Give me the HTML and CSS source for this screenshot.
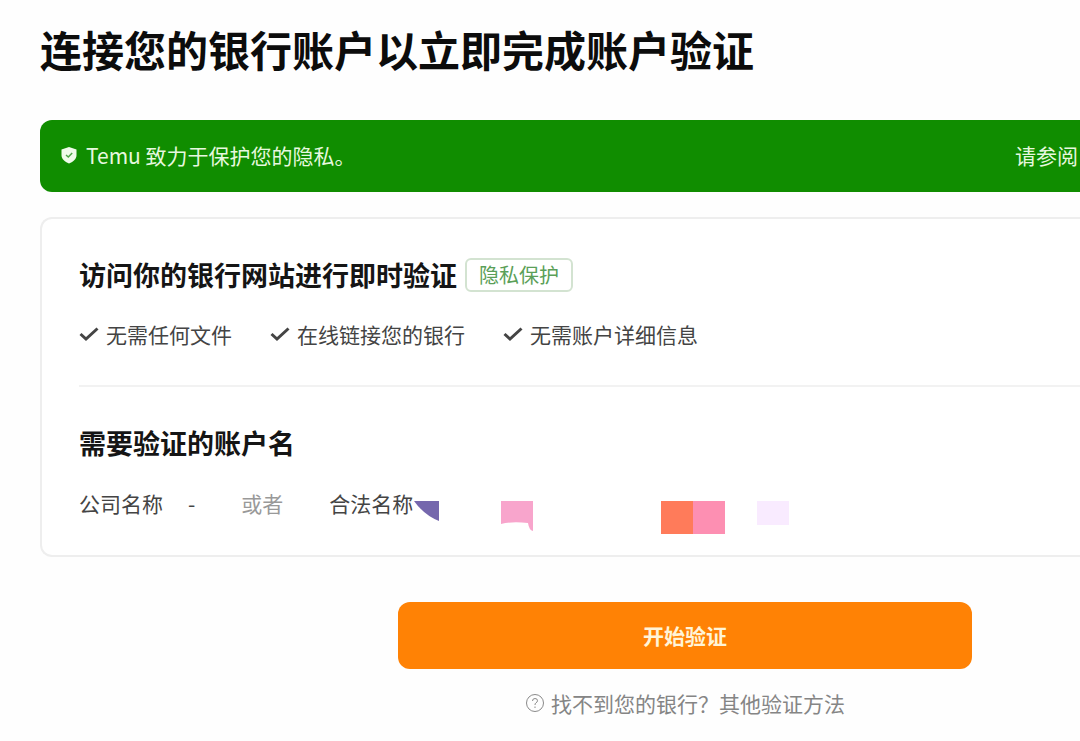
FILE: index.html
```
<!DOCTYPE html>
<html lang="zh-CN">
<head>
  <meta charset="UTF-8" />
  <meta name="viewport" content="width=device-width, initial-scale=1.0"/>
  <title>账户验证</title>
  <link rel="stylesheet" href="styles.css">
</head>
<body>

  <main>
    <h1>连接您的银行账户以立即完成账户验证</h1>

    <div class="banner">
      <svg class="shield" viewBox="0 0 16 18" aria-hidden="true">
        <path fill="#effbea" d="M8 1 L15.5 3.5 V9 C15.5 13 12.5 15.5 8 17.5 C3.5 15.5 .5 13 .5 9 V3.5 Z"/>
        <path fill="none" stroke="#4fa548" stroke-width="1.5" d="M5 9 L7.3 11 L11.2 7"/>
      </svg>
      <span>Temu 致力于保护您的隐私。</span>
      <a href="#" class="banner-link">请参阅</a>
    </div>

    <section class="card">
      <div class="card-title">
        <h2>访问你的银行网站进行即时验证</h2>
        <span class="badge">隐私保护</span>
      </div>
      <ul class="features">
        <li><svg class="check" viewBox="0 0 20 16" aria-hidden="true"><path d="M1.5 8 L7 13 L18.5 2.5"/></svg>无需任何文件</li>
        <li><svg class="check" viewBox="0 0 20 16" aria-hidden="true"><path d="M1.5 8 L7 13 L18.5 2.5"/></svg>在线链接您的银行</li>
        <li><svg class="check" viewBox="0 0 20 16" aria-hidden="true"><path d="M1.5 8 L7 13 L18.5 2.5"/></svg>无需账户详细信息</li>
      </ul>

      <h2 class="names-title">需要验证的账户名</h2>
      <div class="names">
        <span>公司名称</span>
        <span class="dash">-</span>
        <span class="or">或者</span>
        <span>合法名称</span>
        <svg class="mask" width="375" height="33" viewBox="0 0 375 33" aria-hidden="true">
          <path fill="#7567ad" d="M0 0 H25 V20 Q10 14 0 0 Z"/>
          <path fill="#f8a5cc" d="M87 0 H119 V30 Q115 29 114 22 Q98 20 87 23 Z"/>
          <path fill="#ff7b5a" d="M247 0 H279 V33 H247 Z"/>
          <path fill="#fd8fb2" d="M279 0 H311 V33 H279 Z"/>
          <path fill="#f9ebff" d="M343 0 H375 V24 H343 Z"/>
        </svg>
      </div>
    </section>

    <div class="actions">
      <button type="button" class="btn">开始验证</button>
      <a href="#" class="help">
        <svg class="question" viewBox="0 0 20 20" aria-hidden="true">
          <circle cx="10" cy="10" r="8.5"/>
          <path d="M7.5 8 Q7.5 5.5 10 5.5 Q12.5 5.5 12.5 7.8 Q12.5 9 10.8 10 Q10 10.5 10 12 M10 13.5 V15"/>
        </svg>
        找不到您的银行？其他验证方法
      </a>
    </div>
  </main>

</body>
</html>
```

FILE: styles.css
```
* {
  box-sizing: border-box;
}

body {
  font-family: "Noto Sans CJK SC", sans-serif;
  font-size: 21px;
  line-height: 30px;
  background: #fefefe;
  color: #444;
  margin: 0;
}

main {
  padding: 20px 0 20px 40px;
}

h1 {
  margin: 0 0 42px;
  font-size: 42px;
  line-height: 58px;
  font-weight: bold;
  color: #0c0c0c;
}

h2 {
  margin: 0;
  font-size: 27px;
  line-height: 36px;
  font-weight: bold;
  color: #151515;
}

a {
  color: inherit;
  text-decoration: none;
}

.banner {
  display: flex;
  align-items: center;
  height: 72px;
  padding: 0 2px 2px 21px;
  background: #108d00;
  color: #e6f8df;
  border-radius: 12px 0 0 12px;
}

.shield {
  width: 16px;
  height: 18px;
  margin-right: 9px;
}

.banner-link {
  margin-left: auto;
}

/* the panel runs off the right edge of the window */
.card {
  margin-top: 25px;
  padding: 38px 0 21px 37px;
  background: #fff;
  border: 2px solid #eee;
  border-right: none;
  border-radius: 12px 0 0 12px;
}

.card-title {
  display: flex;
  align-items: center;
  gap: 8px;
}

.badge {
  padding: 0 12px;
  border: 2px solid #d3e3d1;
  border-radius: 6px;
  font-size: 20px;
  color: #5b9f58;
}

.features {
  display: flex;
  gap: 38px;
  margin: 0;
  padding: 26px 0 36px;
  list-style: none;
  border-bottom: 2px solid #f2f2f2;
}

.features li {
  display: flex;
  align-items: center;
}

.check {
  width: 20px;
  height: 16px;
  margin-right: 7px;
  fill: none;
  stroke: #444;
  stroke-width: 3;
}

.names-title {
  margin-top: 38px;
}

.names {
  display: flex;
  align-items: flex-start;
  margin-top: 27px;
}

.dash {
  margin-left: 25px;
}

.or {
  margin: 0 46px;
  color: #999;
}

.mask {
  margin: 13px 0 0 1px;
}

.actions {
  display: flex;
  flex-direction: column;
  align-items: center;
  gap: 19px;
  margin-top: 45px;
  padding-left: 250px;
}

.btn {
  width: 574px;
  max-width: 100%;
  height: 67px;
  padding: 0 0 2px;
  border: none;
  border-radius: 12px;
  background: #ff8205;
  color: #fff4d8;
  font-family: inherit;
  font-size: 21px;
  font-weight: bold;
  cursor: pointer;
}

.btn:hover {
  background: #f27800;
}

.help {
  display: flex;
  align-items: center;
  color: #858585;
}

.question {
  width: 20px;
  height: 20px;
  margin-right: 6px;
  fill: none;
  stroke: #8a8a8a;
  stroke-width: 1;
}
```
